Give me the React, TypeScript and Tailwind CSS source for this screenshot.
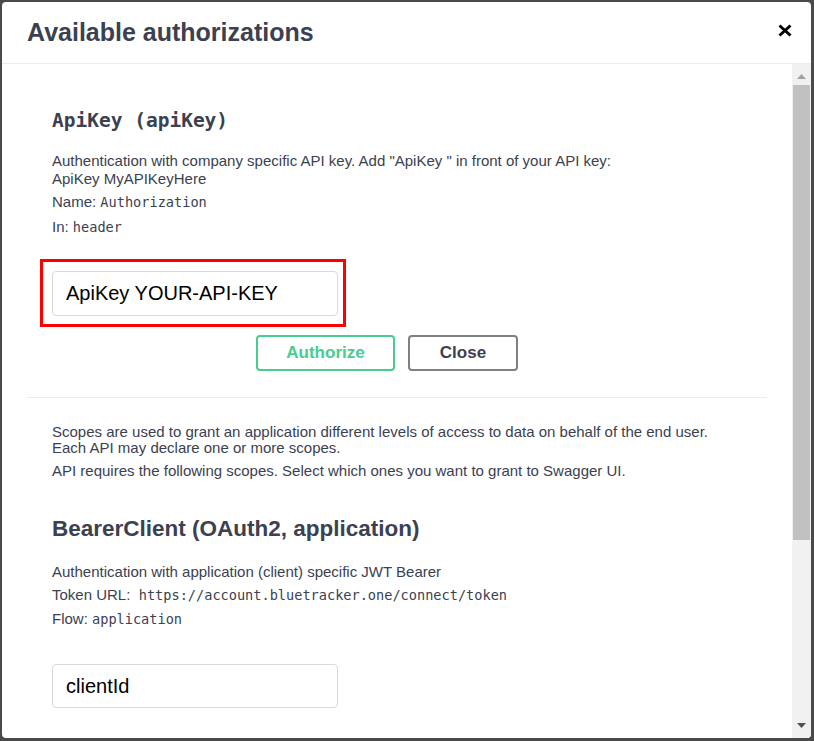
import React from "react";

const mono = "font-['DejaVu_Sans_Mono','Liberation_Mono',monospace]";

function Scrollbar() {
  return (
    <div className="flex w-[19px] shrink-0 flex-col bg-[#f1f1f1]">
      <div className="flex h-[21px] items-start justify-center pt-[10px]">
        <svg width="9" height="5" viewBox="0 0 9 5">
          <path d="M0 5 L4.5 0 L9 5 Z" fill="#a3a3a3" />
        </svg>
      </div>
      <div className="ml-[1px] h-[455px] w-[17px] bg-[#c1c1c1]" />
      <div className="flex flex-1 items-end justify-center pb-[10px]">
        <svg width="9" height="5" viewBox="0 0 9 5">
          <path d="M0 0 L9 0 L4.5 5 Z" fill="#505050" />
        </svg>
      </div>
    </div>
  );
}

export default function App() {
  return (
    <div className="h-[741px] w-[814px] bg-[#4a4a4a] pb-[3px] pl-[2px] pr-[3px] pt-[2px] font-['Liberation_Sans',Arial,sans-serif] text-[#3b4151]">
      <div className="flex h-full flex-col overflow-hidden rounded-[4px] bg-white">
        <header className="flex h-[62px] shrink-0 items-center justify-between border-b border-[#ebebeb] pl-[25px] pr-[19px]">
          <h3 className="mb-[2px] text-[25px] font-bold leading-[30px]">Available authorizations</h3>
          <button className="mb-[5px] flex h-[14px] w-[14px] items-center justify-center">
            <svg width="14" height="13" viewBox="0 0 14 13">
              <path d="M1.5 1.5 L12.5 11.5 M12.5 1.5 L1.5 11.5" stroke="#000" strokeWidth="3" />
            </svg>
          </button>
        </header>

        <div className="flex min-h-0 flex-1">
          <div className="flex-1 overflow-hidden px-[25px]">
            <div className="px-[25px] pt-[45px]">
              <h4 className={`${mono} text-[19.5px] font-bold leading-[24px]`}>ApiKey (apiKey)</h4>
              <p className="mt-[19px] text-[15px] leading-[18px]">
                Authentication with company specific API key. Add "ApiKey " in front of your API key:
                <br />
                ApiKey MyAPIKeyHere
              </p>
              <p className="mt-[5px] text-[15px] leading-[18px]">
                Name: <code className={`${mono} text-[13.6px]`}>Authorization</code>
              </p>
              <p className="mt-[7px] text-[15px] leading-[18px]">
                In: <code className={`${mono} text-[13.6px]`}>header</code>
              </p>

              <div className="relative mt-[35px] w-[286px]">
                <input
                  readOnly
                  value="ApiKey YOUR-API-KEY"
                  className="block h-[45px] w-full rounded-[4px] border border-[#d9d9d9] bg-white px-[13px] text-[20px] text-black outline-none"
                />
                <div className="pointer-events-none absolute -bottom-[11px] -left-[12px] -right-[8px] -top-[12px] border-[3px] border-[#ff0000]" />
              </div>

              <div className="ml-[204px] mt-[19px] flex gap-[13px]">
                <button className="h-[36px] w-[139px] rounded-[4px] border-2 border-[#49cc90] text-[17px] font-bold text-[#49cc90]">
                  Authorize
                </button>
                <button className="h-[36px] w-[110px] rounded-[4px] border-2 border-[#808080] text-[17px] font-bold text-[#3b4151]">
                  Close
                </button>
              </div>
            </div>

            <div className="mt-[26px] h-px bg-[#ebebeb]" />

            <div className="px-[25px]">
              <p className="mt-[26px] text-[15px] leading-[16px]">
                Scopes are used to grant an application different levels of access to data on behalf of the end user.
                <br />
                Each API may declare one or more scopes.
              </p>
              <p className="mt-[7px] text-[15px] leading-[16px]">
                API requires the following scopes. Select which ones you want to grant to Swagger UI.
              </p>

              <h4 className="mt-[36px] text-[22.5px] font-bold leading-[28px]">BearerClient (OAuth2, application)</h4>
              <p className="mt-[20px] text-[15px] leading-[18px]">
                Authentication with application (client) specific JWT Bearer
              </p>
              <p className="mt-[5px] text-[15px] leading-[18px]">
                Token URL:&nbsp; <code className={`${mono} text-[13.6px]`}>https://account.bluetracker.one/connect/token</code>
              </p>
              <p className="mt-[6px] text-[15px] leading-[18px]">
                Flow: <code className={`${mono} text-[13.6px]`}>application</code>
              </p>

              <input
                readOnly
                value="clientId"
                className="mt-[36px] block h-[44px] w-[286px] rounded-[4px] border border-[#d9d9d9] bg-white px-[13px] text-[20px] text-black outline-none"
              />
            </div>
          </div>
          <Scrollbar />
        </div>
      </div>
    </div>
  );
}
